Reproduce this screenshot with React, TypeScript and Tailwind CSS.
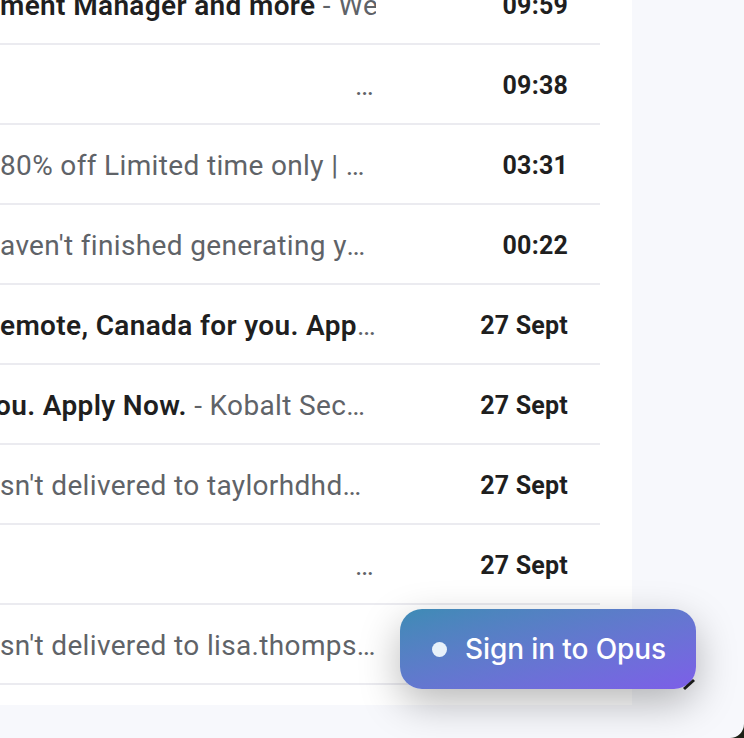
import React from "react";

type Row = {
  bold?: string;
  snippet?: string;
  time: string;
  end?: boolean;
  clip?: boolean;
  shift?: string;
};

const rows: Row[] = [
  { bold: "ment Manager and more", snippet: " - Wellfound weekly digest", time: "09:59", clip: true },
  { time: "09:38", end: true },
  { snippet: "80% off Limited time only | Offer ends tonight", time: "03:31" },
  { snippet: "aven't finished generating your report yet", time: "00:22" },
  { bold: "emote, Canada for you. Apply Now.", time: "27 Sept" },
  { bold: "ou. Apply Now.", snippet: " - Kobalt Security is hiring", time: "27 Sept", shift: "-ml-[5px]" },
  { snippet: "sn't delivered to taylorhdhdhd@example.com", time: "27 Sept" },
  { time: "27 Sept", end: true },
  { snippet: "sn't delivered to lisa.thompson@example.com", time: "" },
];

function MailRow({ row }: { row: Row }) {
  return (
    <div className="flex h-[80px] w-[600px] items-center border-b-2 border-[#ebebf0] pr-[32px] pt-[3px]">
      <div
        className={`w-[376px] overflow-hidden whitespace-nowrap text-[28px] tracking-[0.35px] text-[#5f6368] ${
          row.clip ? "text-clip" : "text-ellipsis"
        } ${row.end ? "text-right pr-[2px]" : ""} ${row.shift ?? ""}`}
      >
        {row.end ? (
          "…"
        ) : (
          <>
            {row.bold && <span className="font-semibold text-[#1f1f1f]">{row.bold}</span>}
            {row.snippet}
          </>
        )}
      </div>
      <div className="ml-auto text-[25px] font-bold tracking-[0.2px] text-[#1f1f1f]">{row.time}</div>
    </div>
  );
}

export default function App() {
  return (
    <div className="h-[738px] w-[744px] overflow-hidden bg-[#1d2016]" style={{ fontFamily: "Roboto, 'Noto Sans', sans-serif" }}>
      <div className="relative h-full w-full overflow-hidden rounded-br-[14px] bg-[#f7f8fc]">
        <div className="h-[705px] w-[632px] overflow-hidden bg-white">
          <div className="-mt-[35px]">
            {rows.map((r, i) => (
              <MailRow key={i} row={r} />
            ))}
          </div>
        </div>

        {/* floating sign-in pill */}
        <button
          className="absolute left-[400px] top-[609px] flex h-[80px] w-[296px] items-center gap-[18px] rounded-[22px] bg-gradient-to-br from-[#3d8bb5] to-[#7c5ee8] pl-[32px] text-white shadow-[0_14px_40px_rgba(0,0,0,0.28)]"
          style={{ fontFamily: "Inter, 'Noto Sans', sans-serif" }}
        >
          <span className="h-[15px] w-[15px] rounded-full bg-[#e8f1fa]" />
          <span className="text-[28px] font-medium tracking-[-0.1px]">Sign in to Opus</span>
        </button>
        <svg className="absolute left-[682px] top-[677px]" width="14" height="14" viewBox="0 0 14 14">
          <line x1="2" y1="12" x2="12" y2="3" stroke="#1a1a1a" strokeWidth="3" />
        </svg>
      </div>
    </div>
  );
}
